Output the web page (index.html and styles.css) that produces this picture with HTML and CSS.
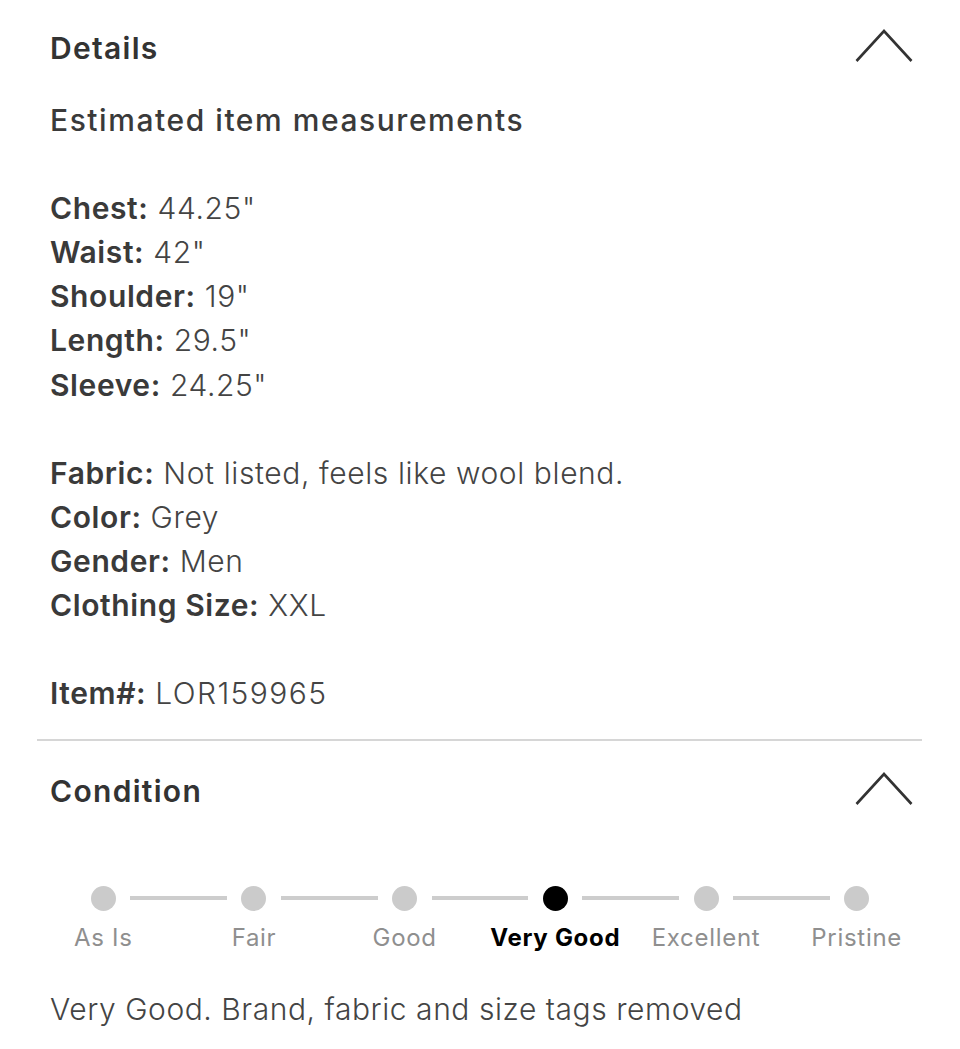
FILE: index.html
```html
<!DOCTYPE html>
<html lang="en">
<head>
<meta charset="utf-8">
<title>Details</title>
<link rel="stylesheet" href="styles.css">
</head>
<body>
<div class="page">
  <section class="panel details">
    <div class="panel-head">
      <h2 class="panel-title">Details</h2>
      <svg class="chevron" width="58" height="34" viewBox="0 0 58 34"><polyline points="1.5,32 29,2 56.5,32" fill="none" stroke="#333" stroke-width="2.6"/></svg>
    </div>
    <div class="details-body">
      <p class="subhead">Estimated item measurements</p>
      <p class="blank"></p>
      <p class="row"><b>Chest:</b> 44.25"</p>
      <p class="row"><b>Waist:</b> 42"</p>
      <p class="row"><b>Shoulder:</b> 19"</p>
      <p class="row"><b>Length:</b> 29.5"</p>
      <p class="row"><b>Sleeve:</b> 24.25"</p>
      <p class="blank"></p>
      <p class="row"><b>Fabric:</b> Not listed, feels like wool blend.</p>
      <p class="row"><b>Color:</b> Grey</p>
      <p class="row"><b>Gender:</b> Men</p>
      <p class="row"><b>Clothing Size:</b> XXL</p>
      <p class="blank"></p>
      <p class="row"><b>Item#:</b> <span class="code">LOR159965</span></p>
    </div>
  </section>
  <hr class="divider">
  <section class="panel condition">
    <div class="panel-head cond-head">
      <h2 class="panel-title">Condition</h2>
      <svg class="chevron" width="58" height="34" viewBox="0 0 58 34"><polyline points="1.5,32 29,2 56.5,32" fill="none" stroke="#333" stroke-width="2.6"/></svg>
    </div>
    <div class="stepper">
      <div class="track">
        <span class="dot"></span><span class="line"></span>
        <span class="dot"></span><span class="line"></span>
        <span class="dot"></span><span class="line"></span>
        <span class="dot active"></span><span class="line"></span>
        <span class="dot"></span><span class="line"></span>
        <span class="dot"></span>
      </div>
      <div class="labels">
        <span>As Is</span>
        <span>Fair</span>
        <span>Good</span>
        <span class="active">Very Good</span>
        <span>Excellent</span>
        <span>Pristine</span>
      </div>
    </div>
    <p class="cond-text">Very Good. Brand, fabric and size tags removed</p>
  </section>
</div>
</body>
</html>
```
FILE: styles.css
```css
html, body {
  margin: 0;
  padding: 0;
  background: #fff;
}
body {
  font-family: Inter, "Liberation Sans", Arial, sans-serif;
  color: #444;
}
.page {
  width: 960px;
}
.panel {
  padding: 0 47px 0 50px;
}
.panel-head {
  display: flex;
  justify-content: space-between;
  align-items: center;
  height: 44px;
  padding-top: 26px;
}
.panel-title {
  margin: 0;
  font-size: 30px;
  font-weight: 600;
  color: #333;
  line-height: 44px;
  letter-spacing: 1.3px;
}
.chevron {
  display: block;
  margin-top: -4px;
}
.details-body {
  padding-top: 28px;
  padding-bottom: 24px;
}
.details-body p {
  margin: 0;
  height: 44.1px;
  line-height: 44.1px;
  font-size: 30px;
  white-space: nowrap;
}
.subhead {
  font-weight: 500;
  color: #3a3a3a;
  letter-spacing: 1.55px;
}
.row {
  font-weight: 300;
  color: #444;
  letter-spacing: 0.6px;
}
.row b {
  font-weight: 600;
  color: #3a3a3a;
}
.row .code {
  letter-spacing: 1.4px;
}
.divider {
  margin: 0 38px 0 37px;
  border: 0;
  height: 2px;
  background: #d6d6d6;
}
.cond-head {
  padding-top: 28px;
}
.stepper {
  margin: 72px -19px 0 -22px;
}
.track {
  display: flex;
  align-items: center;
  padding: 0 62.5px;
  height: 26px;
}
.dot {
  flex: 0 0 25px;
  height: 25px;
  border-radius: 50%;
  background: #cbcbcb;
}
.dot.active {
  background: #000;
}
.line {
  flex: 1;
  height: 4px;
  margin: 0 14.5px;
  background: #cdcdcd;
}
.labels {
  display: grid;
  grid-template-columns: repeat(6, 1fr);
  margin-top: 13px;
  font-size: 24px;
  line-height: 28px;
  color: #8f8f8f;
  text-align: center;
  letter-spacing: 0.7px;
}
.labels .active {
  color: #000;
  font-weight: 700;
}
.cond-text {
  margin: 35px 0 0;
  font-size: 30px;
  font-weight: 300;
  color: #444;
  line-height: 44px;
  white-space: nowrap;
  letter-spacing: 0.55px;
}
```
